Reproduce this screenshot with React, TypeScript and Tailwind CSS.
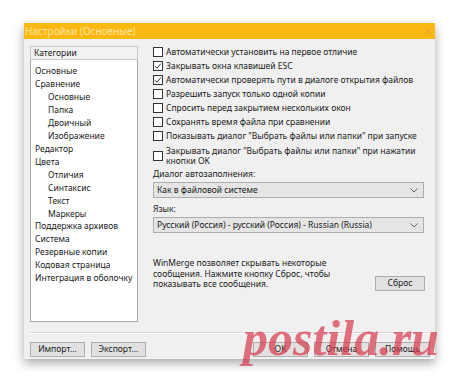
import React from "react";

const categories = [
  { label: "Основные", sub: false },
  { label: "Сравнение", sub: false },
  { label: "Основные", sub: true },
  { label: "Папка", sub: true },
  { label: "Двоичный", sub: true },
  { label: "Изображение", sub: true },
  { label: "Редактор", sub: false },
  { label: "Цвета", sub: false },
  { label: "Отличия", sub: true },
  { label: "Синтаксис", sub: true },
  { label: "Текст", sub: true },
  { label: "Маркеры", sub: true },
  { label: "Поддержка архивов", sub: false },
  { label: "Система", sub: false },
  { label: "Резервные копии", sub: false },
  { label: "Кодовая страница", sub: false },
  { label: "Интеграция в оболочку", sub: false },
];

const options = [
  { label: "Автоматически установить на первое отличие", checked: false },
  { label: "Закрывать окна клавишей ESC", checked: true },
  { label: "Автоматически проверять пути в диалоге открытия файлов", checked: true },
  { label: "Разрешить запуск только одной копии", checked: false },
  { label: "Спросить перед закрытием нескольких окон", checked: false },
  { label: "Сохранять время файла при сравнении", checked: false },
  { label: "Показывать диалог \"Выбрать файлы или папки\" при запуске", checked: false },
];

const Checkbox = ({ checked }: { checked: boolean }) => (
  <span className="w-[10px] h-[10px] shrink-0 border border-[#333] bg-white flex items-center justify-center">
    {checked && (
      <svg width="8" height="8" viewBox="0 0 8 8">
        <path d="M1 4.2 L3 6.2 L7 1.5" fill="none" stroke="#333" strokeWidth="1" />
      </svg>
    )}
  </span>
);

const Chevron = () => (
  <svg width="8" height="5" viewBox="0 0 8 5" className="shrink-0">
    <path d="M0.5 0.5 L4 4 L7.5 0.5" fill="none" stroke="#666" strokeWidth="1" />
  </svg>
);

const Select = ({ value }: { value: string }) => (
  <div className="h-[16px] w-[271px] border border-[#adadad] bg-[#e5e5e5] flex items-center justify-between pl-[3px] pr-[5px]">
    <span>{value}</span>
    <Chevron />
  </div>
);

const Button = ({ children, w = "w-[55px]" }: { children: React.ReactNode; w?: string }) => (
  <div className={`${w} h-[15px] border border-[#adadad] bg-[#e1e1e1] flex items-center justify-center`}>
    {children}
  </div>
);

export default function App() {
  return (
    <div
      className="relative w-[460px] h-[383px] bg-white overflow-hidden text-[8.5px] text-[#1a1a1a] leading-none whitespace-nowrap"
      style={{ fontFamily: '"Noto Sans", "Open Sans", sans-serif' }}
    >
      <div className="absolute left-[24px] top-[23px] w-[411px] h-[336px] bg-[#f0f0f0] shadow-[0_4px_10px_rgba(0,0,0,0.35)] flex flex-col">
        {/* title bar */}
        <div className="h-[16px] bg-[#fbb811] flex items-center justify-between pl-[1px] pr-[3px]">
          <span className="text-[#fde3a1] text-[10px]">Настройки (Основные)</span>
          <svg width="8" height="8" viewBox="0 0 8 8">
            <path d="M0.5 0.5 L7.5 7.5 M7.5 0.5 L0.5 7.5" stroke="#e29a3a" strokeWidth="1" />
          </svg>
        </div>

        <div className="flex pl-[6px] pt-[7px]">
          {/* categories */}
          <div className="w-[108px] flex flex-col">
            <div className="h-[14px] border border-[#c8c8c8] bg-[#f3f3f3] flex items-center pl-[3px]">
              Категории
            </div>
            <div className="h-[262px] border border-[#a8a8a8] border-t-0 bg-white pt-[5px] pl-[4px]">
              {categories.map((c, i) => (
                <div key={i} className={`h-[12.95px] flex items-center ${c.sub ? "pl-[13px]" : ""}`}>
                  {c.label}
                </div>
              ))}
            </div>
          </div>

          {/* options */}
          <div className="ml-[15px] flex flex-col -mt-[1px]">
            {options.map((o, i) => (
              <div key={i} className="h-[14px] flex items-center gap-[3px]">
                <Checkbox checked={o.checked} />
                <span>{o.label}</span>
              </div>
            ))}
            <div className="h-[25px] flex items-center gap-[3px]">
              <Checkbox checked={false} />
              <span className="leading-[10px]">
                Закрывать диалог "Выбрать файлы или папки" при нажатии
                <br />
                кнопки OK
              </span>
            </div>
            <div className="h-[13px] flex items-center">Диалог автозаполнения:</div>
            <div className="mt-[1px]">
              <Select value="Как в файловой системе" />
            </div>
            <div className="h-[19px] flex items-center pt-[3px]">Язык:</div>
            <Select value="Русский (Россия) - русский (Россия) - Russian (Russia)" />

            <div className="flex mt-[25px] w-[272px] justify-between">
              <div className="leading-[10.5px]">
                WinMerge позволяет скрывать некоторые
                <br />
                сообщения. Нажмите кнопку Сброс, чтобы
                <br />
                показывать все сообщения.
              </div>
              <div className="pt-[18px]">
                <Button w="w-[50px]">Сброс</Button>
              </div>
            </div>
          </div>
        </div>

        <div className="mx-[6px] mt-[10px] border-t border-[#d8d8d8] border-b border-b-white" />

        <div className="flex justify-between pl-[6px] pr-[5px] pt-[8px]">
          <div className="flex gap-[6px]">
            <Button>Импорт...</Button>
            <Button>Экспорт...</Button>
          </div>
          <div className="flex gap-[6px]">
            <Button>OK</Button>
            <Button>Отмена</Button>
            <Button>Помощь</Button>
          </div>
        </div>
      </div>

      {/* watermark */}
      <div
        className="absolute left-[243px] top-[313px] text-[50px] font-bold italic text-[#d9384c]/70 leading-none"
        style={{ fontFamily: '"Liberation Serif", "DejaVu Serif", serif' }}
      >
        postila.ru
      </div>
    </div>
  );
}
